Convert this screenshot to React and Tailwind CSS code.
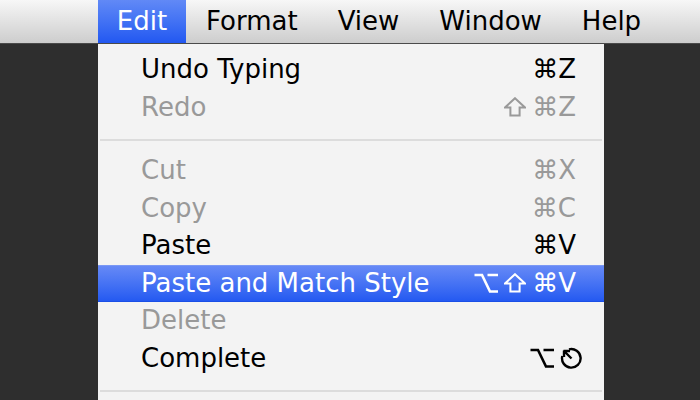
import React from 'react';

const menus = ['Edit', 'Format', 'View', 'Window', 'Help'];

// drawn glyphs for the modifier keys (font versions look too thin)
const Shift = () => (
    <svg width="22" height="20" viewBox="0 0 22 20" className="shrink-0">
        <path d="M11 1.2 L21 10.5 H15.6 V18.5 H6.4 V10.5 H1 Z" fill="none" stroke="currentColor" strokeWidth="2" strokeLinejoin="miter" />
    </svg>
);

const Option = () => (
    <svg width="24" height="20" viewBox="0 0 24 20" className="shrink-0">
        <path d="M0.5 2 H8 L16 18.5 H24 M13.5 2 H24" fill="none" stroke="currentColor" strokeWidth="2.6" />
    </svg>
);

const Escape = () => (
    <svg width="23" height="23" viewBox="0 0 23 23" className="shrink-0">
        <path d="M9 2.3 A9.3 9.3 0 1 1 2.3 9" fill="none" stroke="currentColor" strokeWidth="2.4" />
        <path d="M4 4 L11.5 11.5 M4 3.5 V10 M3.5 4 H10" fill="none" stroke="currentColor" strokeWidth="2.4" />
    </svg>
);

const glyph = (k, i) => {
    if (k === '⇧') return <Shift key={i} />;
    if (k === '⌥') return <Option key={i} />;
    if (k === '⎋') return <Escape key={i} />;
    return <span key={i}>{k}</span>;
};

const items = [
    { label: 'Undo Typing', keys: ['⌘Z'] },
    { label: 'Redo', keys: ['⇧', '⌘Z'], disabled: true },
    { sep: true },
    { label: 'Cut', keys: ['⌘X'], disabled: true },
    { label: 'Copy', keys: ['⌘C'], disabled: true },
    { label: 'Paste', keys: ['⌘V'] },
    { label: 'Paste and Match Style', keys: ['⌥', '⇧', '⌘V'], active: true },
    { label: 'Delete', disabled: true },
    { label: 'Complete', keys: ['⌥', '⎋'], complete: true },
    { sep: true },
];

const MenuRow = ({ item }) => {
    if (item.sep) {
        return (
            <div className="h-[26px] pt-[13px] px-[2px]">
                <div className="h-[2px] w-full bg-[#dcdcdc]" />
            </div>
        );
    }
    const color = item.active ? 'text-white' : item.disabled ? 'text-[#999999]' : 'text-black';
    return (
        <div
            className={`h-[37.5px] flex items-center justify-between pl-[43px] ${item.complete ? 'pr-[21px]' : 'pr-[28px]'} ${color} ${
                item.active ? 'bg-gradient-to-b from-[#6689f6] to-[#2459f1] border-t border-t-[#7a98f5] border-b border-b-[#1a4fe6]' : ''
            }`}
        >
            <span>{item.label}</span>
            {item.keys && <span className="flex items-center gap-[6px]">{item.keys.map(glyph)}</span>}
        </div>
    );
};

export default function App() {
    return (
        <div
            className="w-[700px] h-[400px] bg-[#2e2e2e] overflow-hidden flex flex-col"
            style={{ fontFamily: '"DejaVu Sans", "Liberation Sans", sans-serif' }}
        >
            {/* menu bar */}
            <div className="h-[44px] shrink-0 flex items-stretch bg-gradient-to-b from-[#f7f7f7] to-[#cdcdcd] border-b border-[#4a4a4a] text-[26px] text-black">
                <div className="w-[98px]" />
                {menus.map((m, i) => (
                    <div
                        key={m}
                        className={`flex items-center ${i === 0 ? 'w-[88px] justify-center text-white bg-gradient-to-b from-[#6189f6] to-[#2257f1]' : 'px-[20px]'}`}
                    >
                        {m}
                    </div>
                ))}
            </div>

            {/* dropdown */}
            <div className="ml-[98px] w-[506px] bg-[#f3f3f3] pt-[7px] text-[26px]">
                {items.map((item, i) => (
                    <MenuRow key={i} item={item} />
                ))}
            </div>
        </div>
    );
}
